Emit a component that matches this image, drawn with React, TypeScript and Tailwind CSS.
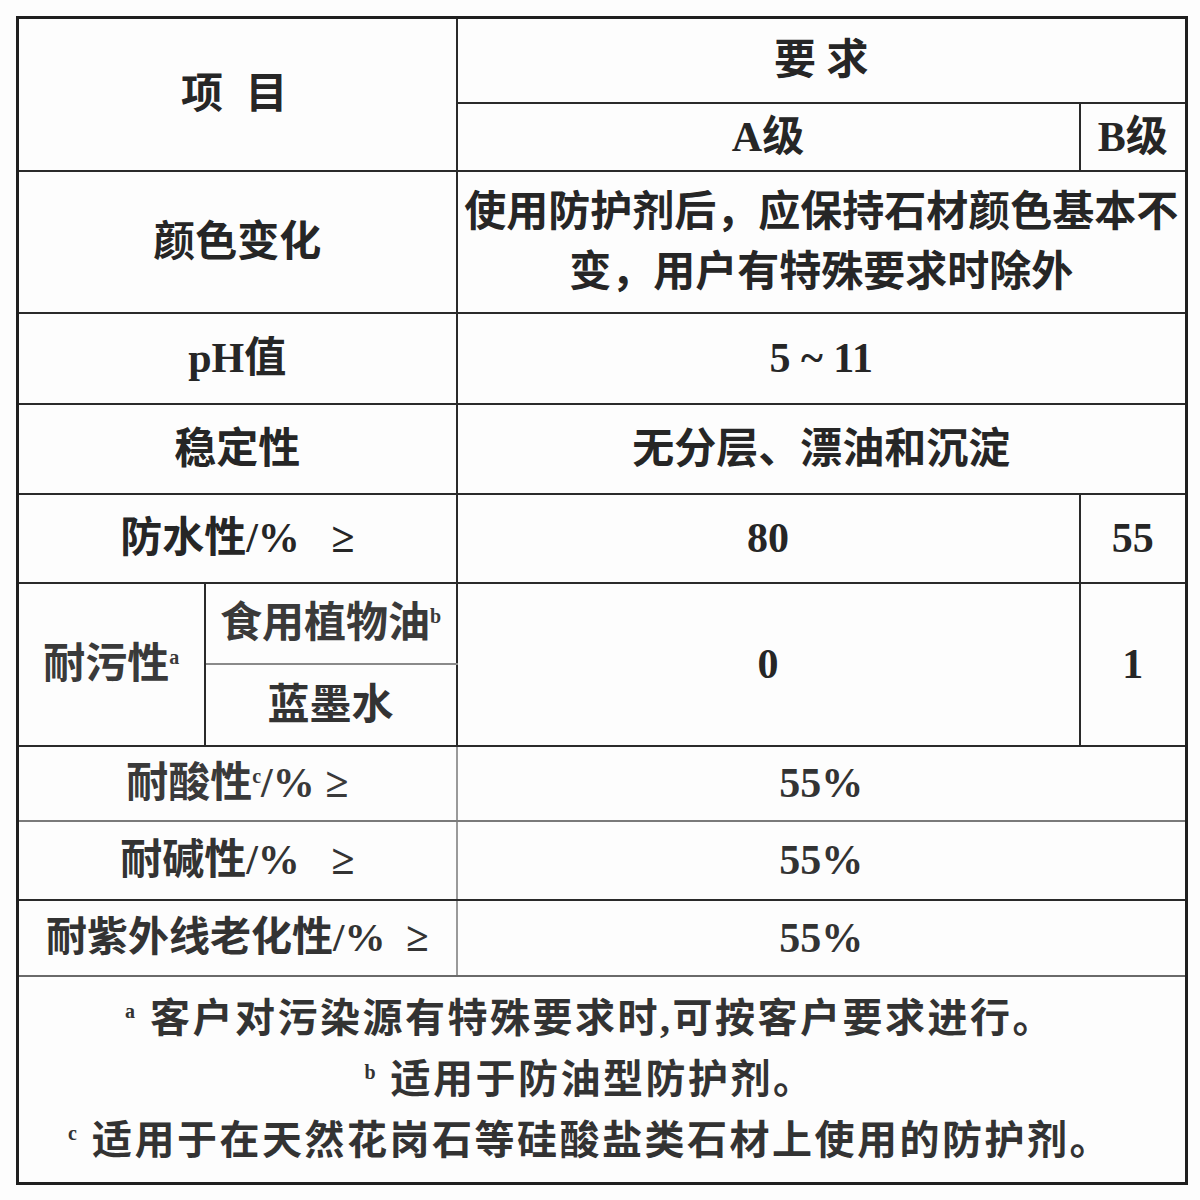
import React from "react";

const font = { fontFamily: '"Liberation Serif", "Noto Sans CJK SC", serif' };

function Sup({ children }: { children: React.ReactNode }) {
    return <span className="relative -top-[14px] text-[20px] font-bold leading-none">{children}</span>;
}

const cell = "border-2 border-[#2a2a2a] text-center align-middle whitespace-nowrap p-0";

export default function App() {
    return (
        <div className="min-h-[1200px] w-[1200px] bg-[#fdfdfd] pl-[16px] pt-[16px]">
            <table
                className="table-fixed border-collapse border-[3px] border-[#1f1f1f] text-[42px] font-semibold leading-none text-[#262626]"
                style={font}
            >
                <colgroup>
                    <col className="w-[187px]" />
                    <col className="w-[252px]" />
                    <col className="w-[623px]" />
                    <col className="w-[107px]" />
                </colgroup>
                <tbody>
                    <tr className="h-[85px]">
                        <td className={`${cell} tracking-[6px]`} rowSpan={2} colSpan={2}>
                            项&nbsp;目
                        </td>
                        <td className={cell} colSpan={2}>
                            要&nbsp;求
                        </td>
                    </tr>
                    <tr className="h-[68px]">
                        <td className={cell}>A级</td>
                        <td className={cell}>B级</td>
                    </tr>
                    <tr className="h-[142px]">
                        <td className={cell} colSpan={2}>
                            颜色变化
                        </td>
                        <td className={`${cell} leading-[60px]`} colSpan={2}>
                            使用防护剂后，应保持石材颜色基本不
                            <br />
                            变，用户有特殊要求时除外
                        </td>
                    </tr>
                    <tr className="h-[91px]">
                        <td className={cell} colSpan={2}>
                            pH值
                        </td>
                        <td className={cell} colSpan={2}>
                            5 ~ 11
                        </td>
                    </tr>
                    <tr className="h-[90px]">
                        <td className={cell} colSpan={2}>
                            稳定性
                        </td>
                        <td className={cell} colSpan={2}>
                            无分层、漂油和沉淀
                        </td>
                    </tr>
                    <tr className="h-[89px]">
                        <td className={cell} colSpan={2}>
                            防水性/%&nbsp;&nbsp;&nbsp;≥
                        </td>
                        <td className={cell}>80</td>
                        <td className={cell}>55</td>
                    </tr>
                    <tr className="h-[81px]">
                        <td className={`${cell} text-[#3a3a3a]`} rowSpan={2}>
                            耐污性<Sup>a</Sup>
                        </td>
                        <td className={`${cell} border-b-[#8a8a8a] text-[#3a3a3a]`}>
                            食用植物油<Sup>b</Sup>
                        </td>
                        <td className={cell} rowSpan={2}>
                            0
                        </td>
                        <td className={cell} rowSpan={2}>
                            1
                        </td>
                    </tr>
                    <tr className="h-[82px]">
                        <td className={`${cell} text-[#333]`}>蓝墨水</td>
                    </tr>
                    <tr className="h-[75px]">
                        <td className={`${cell} border-b-[#7a7a7a] border-r-[#9a9a9a] text-[#3a3a3a]`} colSpan={2}>
                            耐酸性<Sup>c</Sup>/%&nbsp;≥
                        </td>
                        <td className={`${cell} border-b-[#7a7a7a] text-[#333]`} colSpan={2}>
                            55%
                        </td>
                    </tr>
                    <tr className="h-[79px]">
                        <td className={`${cell} border-r-[#9a9a9a] text-[#333]`} colSpan={2}>
                            耐碱性/%&nbsp;&nbsp;&nbsp;≥
                        </td>
                        <td className={`${cell} text-[#333]`} colSpan={2}>
                            55%
                        </td>
                    </tr>
                    <tr className="h-[76px]">
                        <td className={`${cell} border-r-[#9a9a9a] border-b-[#6a6a6a] text-[41px] text-[#333]`} colSpan={2}>
                            耐紫外线老化性/%&nbsp;&nbsp;≥
                        </td>
                        <td className={`${cell} border-b-[#6a6a6a] text-[#333]`} colSpan={2}>
                            55%
                        </td>
                    </tr>
                    <tr className="h-[208px]">
                        <td className={`${cell} pr-[24px] text-[40px] leading-[61px] tracking-[2.5px] text-[#333]`} colSpan={4}>
                            <div>
                                <Sup>a</Sup> 客户对污染源有特殊要求时,可按客户要求进行。
                            </div>
                            <div>
                                <Sup>b</Sup> 适用于防油型防护剂。
                            </div>
                            <div>
                                <Sup>c</Sup> 适用于在天然花岗石等硅酸盐类石材上使用的防护剂。
                            </div>
                        </td>
                    </tr>
                </tbody>
            </table>
        </div>
    );
}
